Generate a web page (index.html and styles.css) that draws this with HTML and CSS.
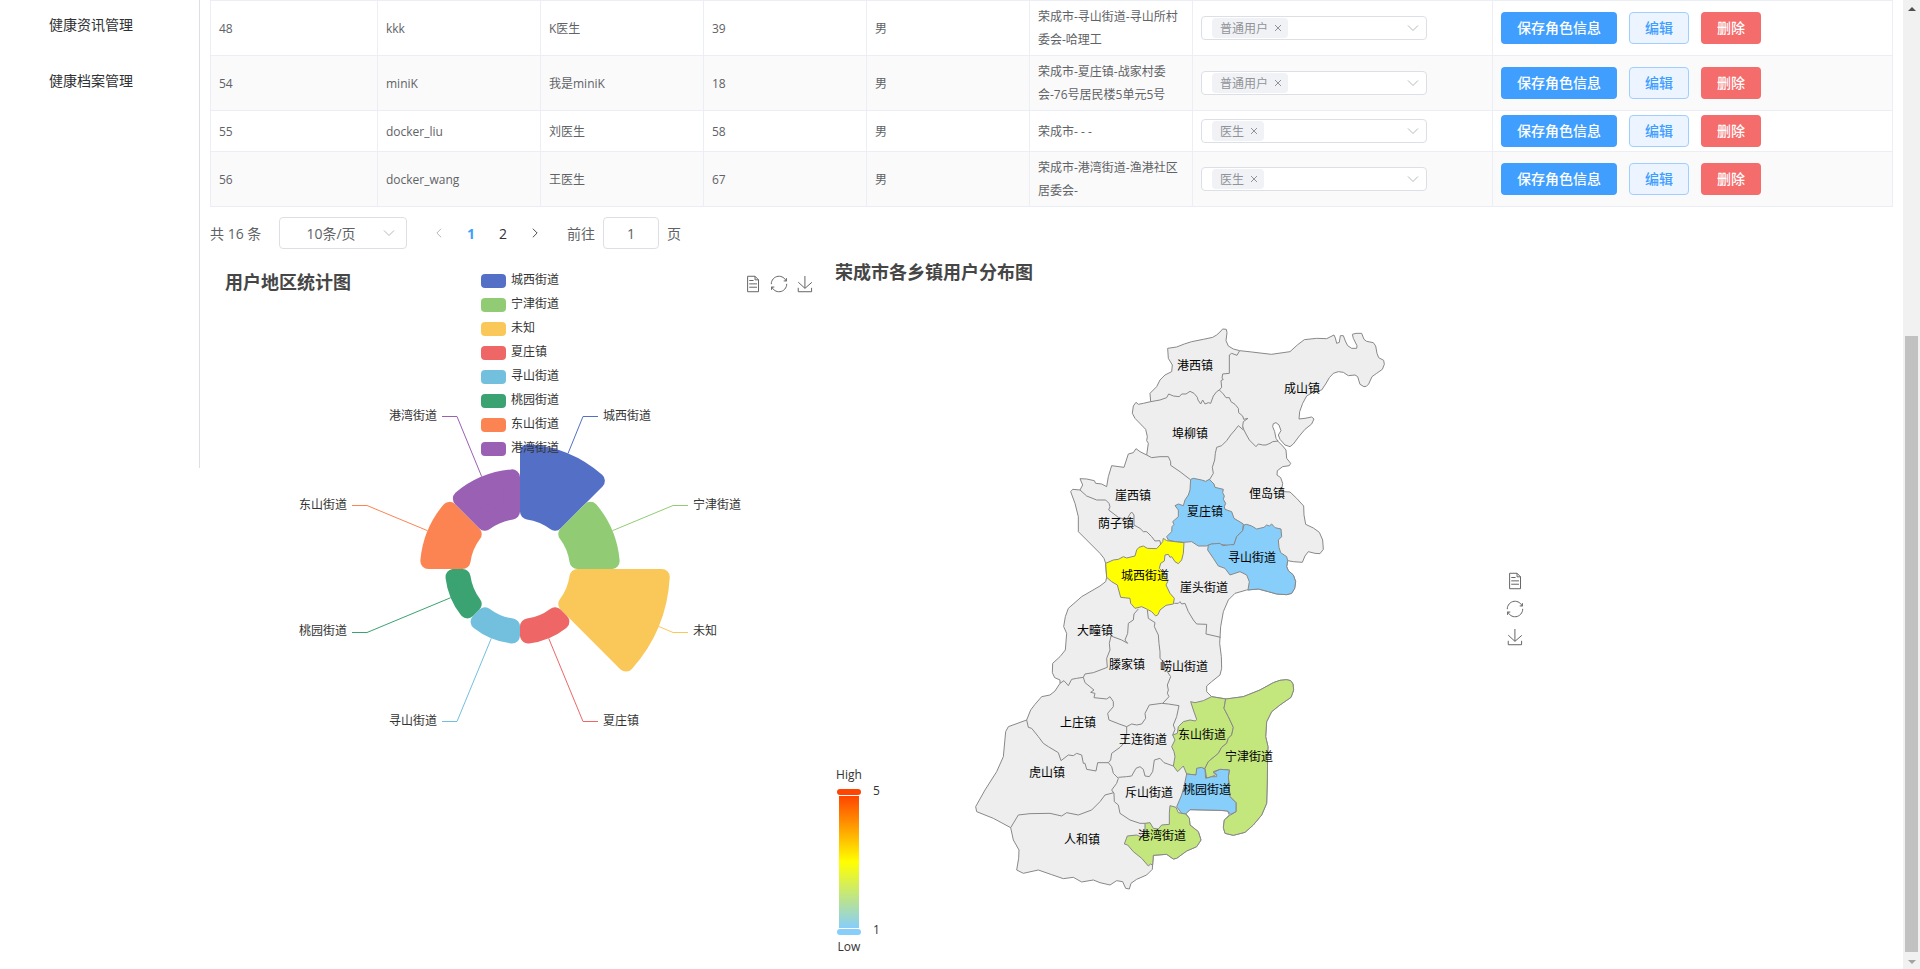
FILE: index.html
```html
<!DOCTYPE html>
<html lang="zh-CN">
<head>
<meta charset="utf-8">
<title>用户管理</title>
<link rel="stylesheet" href="styles.css">
</head>
<body>
<svg class="defs" aria-hidden="true">
  <symbol id="chevron" viewBox="0 0 14 14"><path d="M2 4.5l5 5 5-5"/></symbol>
  <symbol id="cross" viewBox="0 0 8 8"><path d="M1 1l6 6M7 1L1 7"/></symbol>
  <symbol id="doc" viewBox="2 1 58 58"><path d="M17.5,17.3H33M45.4,29.5h-28M11.5,2v56H51V14.8L38.4,2H11.5zM38.4,2.2v12.7H51M45.4,41.7h-28"/></symbol>
  <symbol id="restore" viewBox="1 1 58 58"><path d="M47,18.9h9.8V8.7M56.3,20.1C52.1,9,40.5,0.6,26.8,2.1C12.6,3.7,1.6,16.2,2.1,30.6M13,41.1H3.1v10.2M3.7,39.9c4.2,11.1,15.8,19.5,29.5,18c14.2-1.6,25.2-14.1,24.7-28.5"/></symbol>
  <symbol id="save" viewBox="0 0 59 59"><path d="M4.7,22.9L29.3,45.5L54.7,23.4M4.6,43.6L4.6,58L53.8,58L53.8,43.6M29.2,45.1L29.2,0"/></symbol>
</svg>
<div class="layout">
  <nav class="sidebar">
    <a class="menu-item" href="#">健康资讯管理</a>
    <a class="menu-item" href="#">健康档案管理</a>
  </nav>
  <main class="main">
    <table class="users">
      <colgroup><col class="c-id"><col class="c-md"><col class="c-md"><col class="c-md"><col class="c-md"><col class="c-md"><col class="c-role"><col></colgroup>
      <tbody>
        <tr><td>48</td><td>kkk</td><td>K医生</td><td>39</td><td>男</td><td>荣成市-寻山街道-寻山所村委会-哈理工</td>
          <td><div class="role"><select class="role-select" aria-label="角色"><option></option></select><span class="tag">普通用户<button class="tag-close" aria-label="移除"><svg><use href="#cross"/></svg></button></span><svg class="chev"><use href="#chevron"/></svg></div></td>
          <td><div class="ops"><button class="btn primary">保存角色信息</button><button class="btn plain">编辑</button><button class="btn danger">删除</button></div></td></tr>
        <tr><td>54</td><td>miniK</td><td>我是miniK</td><td>18</td><td>男</td><td>荣成市-夏庄镇-战家村委会-76号居民楼5单元5号</td>
          <td><div class="role"><select class="role-select" aria-label="角色"><option></option></select><span class="tag">普通用户<button class="tag-close" aria-label="移除"><svg><use href="#cross"/></svg></button></span><svg class="chev"><use href="#chevron"/></svg></div></td>
          <td><div class="ops"><button class="btn primary">保存角色信息</button><button class="btn plain">编辑</button><button class="btn danger">删除</button></div></td></tr>
        <tr><td>55</td><td>docker_liu</td><td>刘医生</td><td>58</td><td>男</td><td>荣成市- - -</td>
          <td><div class="role"><select class="role-select" aria-label="角色"><option></option></select><span class="tag">医生<button class="tag-close" aria-label="移除"><svg><use href="#cross"/></svg></button></span><svg class="chev"><use href="#chevron"/></svg></div></td>
          <td><div class="ops"><button class="btn primary">保存角色信息</button><button class="btn plain">编辑</button><button class="btn danger">删除</button></div></td></tr>
        <tr><td>56</td><td>docker_wang</td><td>王医生</td><td>67</td><td>男</td><td>荣成市-港湾街道-渔港社区居委会-</td>
          <td><div class="role"><select class="role-select" aria-label="角色"><option></option></select><span class="tag">医生<button class="tag-close" aria-label="移除"><svg><use href="#cross"/></svg></button></span><svg class="chev"><use href="#chevron"/></svg></div></td>
          <td><div class="ops"><button class="btn primary">保存角色信息</button><button class="btn plain">编辑</button><button class="btn danger">删除</button></div></td></tr>
      </tbody>
    </table>

    <div class="pager">
      <span class="total">共 16 条</span>
      <div class="size"><select class="size-select" aria-label="每页条数"><option>10条/页</option></select><svg class="chev"><use href="#chevron"/></svg></div>
      <div class="pages">
        <button class="page off" aria-label="上一页"><svg class="arrow prev"><use href="#chevron"/></svg></button>
        <button class="page current">1</button>
        <button class="page">2</button>
        <button class="page" aria-label="下一页"><svg class="arrow next"><use href="#chevron"/></svg></button>
      </div>
      <label class="jump">前往<input class="jump-input" type="text" value="1">页</label>
    </div>

    <div class="charts">
      <section class="chart pie">
        <svg class="plot" width="600" height="600" viewBox="220 269 600 600">
          <g transform="translate(520 569)" class="wedges">
            <path fill="#5470c6" stroke="#5470c6" d="M8-57.446V-116.726A117 117 0 0 1 76.881-88.195L34.963-46.277A58 58 0 0 0 8-57.446Z"/>
            <path fill="#91cc75" stroke="#91cc75" transform="rotate(45)" d="M8-57.446V-91.651A92 92 0 0 1 59.15-70.464L34.963-46.277A58 58 0 0 0 8-57.446Z"/>
            <path fill="#fac858" stroke="#fac858" transform="rotate(90)" d="M8-57.446V-141.774A142 142 0 0 1 94.592-105.906L34.963-46.277A58 58 0 0 0 8-57.446Z"/>
            <path fill="#ee6666" stroke="#ee6666" transform="rotate(135)" d="M8-57.446V-66.521A67 67 0 0 1 41.38-52.69L34.963-46.277A58 58 0 0 0 8-57.446Z"/>
            <path fill="#73c0de" stroke="#73c0de" transform="rotate(180)" d="M8-57.446V-66.521A67 67 0 0 1 41.38-52.69L34.963-46.277A58 58 0 0 0 8-57.446Z"/>
            <path fill="#3ba272" stroke="#3ba272" transform="rotate(225)" d="M8-57.446V-66.521A67 67 0 0 1 41.38-52.69L34.963-46.277A58 58 0 0 0 8-57.446Z"/>
            <path fill="#fc8452" stroke="#fc8452" transform="rotate(270)" d="M8-57.446V-91.651A92 92 0 0 1 59.15-70.464L34.963-46.277A58 58 0 0 0 8-57.446Z"/>
            <path fill="#9a60b4" stroke="#9a60b4" transform="rotate(315)" d="M8-57.446V-91.651A92 92 0 0 1 59.15-70.464L34.963-46.277A58 58 0 0 0 8-57.446Z"/>
          </g>
          <g class="leaders">
            <path stroke="#5470c6" d="M568 453.5L583 416.5H598"/>
            <path stroke="#91cc75" d="M612.4 530.7L673 505.5H688"/>
            <path stroke="#fac858" d="M658.6 626.4L673 632.5H688"/>
            <path stroke="#ee6666" d="M548.7 638.3L583 721.5H598"/>
            <path stroke="#73c0de" d="M491.3 638.3L457 721.5H442"/>
            <path stroke="#3ba272" d="M450.7 597.7L367 632.5H352"/>
            <path stroke="#fc8452" d="M427.6 530.7L367 505.5H352"/>
            <path stroke="#9a60b4" d="M481.7 476.6L457 416.5H442"/>
          </g>
          <g class="labels">
            <text x="603" y="420">城西街道</text><text x="693" y="509">宁津街道</text><text x="693" y="635">未知</text><text x="603" y="725">夏庄镇</text>
            <g class="end"><text x="437" y="725">寻山街道</text><text x="347" y="635">桃园街道</text><text x="347" y="509">东山街道</text><text x="437" y="420">港湾街道</text></g>
          </g>
        </svg>
        <h2 class="chart-title">用户地区统计图</h2>
        <ul class="legend">
          <li><i style="background:#5470c6"></i>城西街道</li>
          <li><i style="background:#91cc75"></i>宁津街道</li>
          <li><i style="background:#fac858"></i>未知</li>
          <li><i style="background:#ee6666"></i>夏庄镇</li>
          <li><i style="background:#73c0de"></i>寻山街道</li>
          <li><i style="background:#3ba272"></i>桃园街道</li>
          <li><i style="background:#fc8452"></i>东山街道</li>
          <li><i style="background:#9a60b4"></i>港湾街道</li>
        </ul>
        <div class="toolbox">
          <button class="tool" aria-label="数据视图"><svg><use href="#doc"/></svg></button>
          <button class="tool" aria-label="还原"><svg><use href="#restore"/></svg></button>
          <button class="tool" aria-label="保存为图片"><svg><use href="#save"/></svg></button>
        </div>
      </section>

      <section class="chart map">
        <svg class="plot" width="700" height="700" viewBox="830 259 700 700">
          <defs><linearGradient id="heat" x1="0" y1="1" x2="0" y2="0"><stop offset="0" stop-color="#87cefa"/><stop offset=".5" stop-color="#ffff00"/><stop offset="1" stop-color="#ff4500"/></linearGradient></defs>
          <g class="regions" transform="translate(960 310) scale(.33333)">
            <path fill="#eee" d="M623 115L650 111 673 102 695 95 730 88 758 82 770 75 780 66 788 57 799 58 801 68 798 92 805 108 820 117 839 122 875 126 934 133 990 125 1012 105 1033 89 1070 85 1100 86 1122 75 1126 84 1130 100 1138 97 1141 77 1150 77 1156 93 1163 107 1175 115 1190 115 1191 107 1180 85 1177 73 1188 70 1205 70 1212 88 1220 94 1240 98 1247 108 1251 130 1256 143 1271 151 1273 163 1267 178 1250 190 1236 200 1226 222 1219 229 1212 230 1200 223 1193 200 1185 195 1165 197 1150 187 1135 185 1120 190 1108 203 1097 222 1085 240 1060 246 1040 258 1028 280 1019 305 1017 327 1035 325 1055 321 1062 327 1055 342 1035 358 1018 378 1000 402 990 410 975 405 960 388 955 375 963 362 957 345 948 338 940 341 938 350 944 365 948 385 955 395 968 408 978 420 980 445 992 460 988 467 968 470 952 482 951 495 962 503 968 520 966 533 973 545 990 546 1010 565 1031 588 1032 615 1037 643 1060 654 1078 667 1088 690 1090 718 1080 731 1065 730 1045 725 1035 738 1027 757 1000 755 983 752 980 770 985 782 1000 795 1007 815 1004 835 995 850 980 854 950 852 925 845 895 837 860 840 825 850 805 870 790 905 782 950 779 1000 784 1040 785 1075 780 1095 755 1115 740 1128 740 1145 755 1160 800 1167 850 1160 900 1140 940 1118 960 1111 980 1109 992 1112 999 1122 1001 1140 993 1162 960 1185 935 1205 920 1235 917 1280 924 1310 923 1330 922 1410 920 1480 905 1515 880 1545 855 1567 820 1576 795 1570 790 1552 793 1530 808 1515 803 1503 780 1501 690 1499 677 1510 688 1525 690 1545 715 1565 723 1590 710 1610 680 1623 650 1645 640 1647 620 1633 580 1636 578 1660 577 1678 560 1695 530 1708 513 1720 508 1737 497 1735 488 1715 470 1712 450 1725 420 1718 400 1710 365 1716 340 1702 310 1706 275 1694 235 1680 190 1690 170 1680 176 1645 177 1620 160 1590 152 1553 100 1525 50 1505 47 1490 75 1440 110 1385 130 1340 137 1265 145 1250 200 1230 212 1200 225 1183 245 1160 270 1155 285 1143 300 1120 300 1110 284 1103 277 1088 278 1060 300 1040 316 1020 320 970 311 950 316 920 325 895 365 860 420 828 437 815 440 802 437 760 432 745 420 730 380 690 355 665 355 620 345 580 332 545 338 538 360 540 368 525 360 506 380 507 403 512 407 520 425 522 440 530 445 500 455 467 492 472 505 432 520 428 528 416 540 425 560 435 565 400 560 392 562 380 557 358 525 325 517 310 520 288 528 277 535 283 550 280 572 275 570 250 590 230 600 210 615 195 635 185 637 165 625 145Z"/>
            <path fill="#87cefa" d="M692 508L700 505 725 510 737 514 748 508 762 522 765 532 790 538 788 548 793 558 790 568 797 580 793 590 795 598 815 605 822 625 850 642 848 662 830 680 823 702 810 708 790 704 755 702 740 708 715 708 695 695 670 697 645 695 625 690 620 680 635 665 636 650 642 643 638 635 655 620 655 600 645 587 655 582 670 587 675 570 685 555 690 540Z"/>
            <path fill="#87cefa" d="M852 645L860 643 875 648 890 657 912 652 920 645 928 648 935 642 945 653 963 657 965 680 955 690 957 712 962 728 980 740 983 752 980 770 985 782 1000 795 1007 815 1004 835 995 850 980 854 950 852 925 845 895 837 864 840 868 815 860 795 840 785 825 790 810 795 795 775 775 768 760 745 743 720 745 705 755 702 780 700 787 707 812 704 822 704 830 680 848 662Z"/>
            <path fill="#ffff00" d="M437 760L460 750 475 748 490 740 500 744 525 738 530 720 537 712 550 708 562 715 590 716 600 705 608 695 610 685 620 692 645 695 672 698 670 730 665 750 655 761 645 755 635 740 630 742 625 733 615 735 613 753 602 760 598 775 608 785 610 795 623 815 618 825 630 850 643 865 640 882 618 886 600 900 594 914 587 918 575 905 562 898 545 890 525 895 512 880 510 865 482 862 472 825 455 815 440 802Z"/>
            <path fill="#c3e67d" d="M755 1160L730 1172 705 1178 692 1175 700 1200 710 1228 706 1233 690 1230 670 1235 655 1250 652 1270 638 1275 645 1290 635 1310 642 1325 645 1340 640 1368 653 1385 670 1368 680 1392 708 1395 712 1375 735 1375 745 1355 775 1330 785 1312 800 1300 805 1285 815 1275 820 1252 805 1220 792 1195 797 1167Z"/>
            <path fill="#c3e67d" d="M797 1167L850 1160 900 1140 940 1118 960 1111 980 1109 992 1112 999 1122 1001 1140 993 1162 960 1185 935 1205 920 1235 917 1280 924 1310 923 1330 922 1410 920 1480 905 1515 880 1545 855 1567 820 1576 795 1570 790 1552 793 1530 808 1517 828 1505 828 1478 810 1460 805 1400 808 1380 780 1378 760 1385 770 1393 755 1400 740 1405 735 1375 745 1355 775 1330 785 1312 800 1300 805 1285 815 1275 820 1252 805 1220 792 1195Z"/>
            <path fill="#87cefa" d="M680 1392L708 1395 710 1375 725 1372 735 1378 737 1405 755 1400 770 1400 770 1393 760 1388 780 1378 808 1380 805 1400 810 1460 828 1478 828 1505 812 1513 803 1503 780 1501 690 1499 677 1512 665 1510 650 1490 665 1455 672 1430Z"/>
            <path fill="#c3e67d" d="M630 1487L648 1492 655 1508 677 1512 688 1525 690 1545 715 1565 723 1590 710 1610 680 1623 650 1645 640 1647 620 1633 580 1636 578 1666 572 1662 565 1668 545 1645 520 1625 503 1605 493 1602 502 1578 530 1575 545 1582 555 1565 555 1540 570 1538 580 1555 595 1557 605 1545 628 1543 628 1510Z"/>
            <g fill="none">
              <path d="M839 122L831 136 815 130 808 135 808 190 788 192 786 205 790 208 783 212 785 232 778 240 790 252 798 263 808 263 813 275 825 283 835 295 836 308 848 318 851 328 864 325 850 335 848 348 850 355"/>
              <path d="M572 275L600 270 620 263 626 252 640 258 658 260 665 252 678 252 690 244 702 250 712 262 714 270 722 282 728 270 735 282 745 278 752 280 760 258 770 245 778 240"/>
              <path d="M850 360L835 347 825 360 812 375 800 392 785 407 770 412 766 430 764 450 757 472 760 490 748 510"/>
              <path d="M848 352L858 372 868 390 880 402 888 410 895 402 908 405 918 405 930 400 938 395 955 393"/>
              <path d="M560 435L575 443 600 440 625 440 632 455 632 466 660 485 690 508"/>
              <path d="M360 540L380 558 410 570 437 570 447 580 450 590 446 600 475 622 500 630 510 612 515 606 522 615 522 645 540 655 550 665 560 665 575 680 585 693 600 692 602 705"/>
              <path d="M643 880L655 880 660 875 665 882 675 880 685 905 700 930 710 942 740 943 738 972 782 982"/>
              <path d="M535 897L522 912 520 930 505 940 503 970 495 990 503 1000 485 990 453 978 448 1000 450 1020 440 1045 442 1072 400 1088 375 1092 370 1102 350 1105 335 1108 325 1127 312 1112 300 1120"/>
              <path d="M562 900L565 925 585 938 583 950 595 975 597 1000 600 1025 600 1045 610 1055 622 1085 632 1100 622 1125 625 1140 622 1150 627 1160 608 1180"/>
              <path d="M370 1102L375 1118 402 1140 392 1147 405 1150 402 1163 440 1167 450 1160 460 1175 460 1190 443 1210 447 1230 480 1243 500 1250 515 1242 530 1245 545 1242 557 1225 555 1210 568 1185 605 1180 625 1182 657 1187 650 1220 640 1245 645 1258 638 1275"/>
              <path d="M200 1230L205 1252 215 1255 235 1280 250 1300 265 1310 295 1328 303 1352 325 1335 340 1337 350 1330 365 1335 370 1360 375 1360 380 1378 408 1383 413 1358 445 1358 455 1370 460 1390 475 1405 470 1420 455 1440 462 1450 463 1475 475 1485 480 1510 510 1530 540 1540 555 1540"/>
              <path d="M500 1250L500 1270 496 1295 480 1312 455 1330 452 1350 445 1358"/>
              <path d="M475 1402L500 1400 515 1398 528 1375 540 1370 550 1378 555 1398 568 1400 578 1385 583 1350 600 1345 612 1358 640 1368"/>
              <path d="M152 1553L175 1515 210 1511 270 1510 305 1518 320 1508 355 1515 395 1500 420 1475 435 1455 462 1448"/>
            </g>
          </g>
          <g class="places">
            <text x="1195" y="370">港西镇</text><text x="1302" y="393">成山镇</text><text x="1190" y="438">埠柳镇</text><text x="1133" y="500">崖西镇</text><text x="1267" y="498">俚岛镇</text><text x="1205" y="516">夏庄镇</text><text x="1116" y="528">荫子镇</text><text x="1252" y="562">寻山街道</text><text x="1145" y="580">城西街道</text><text x="1204" y="592">崖头街道</text><text x="1095" y="635">大疃镇</text><text x="1127" y="669">滕家镇</text><text x="1184" y="671">崂山街道</text><text x="1078" y="727">上庄镇</text><text x="1143" y="744">王连街道</text><text x="1202" y="739">东山街道</text><text x="1249" y="761">宁津街道</text><text x="1047" y="777">虎山镇</text><text x="1149" y="797">斥山街道</text><text x="1207" y="794">桃园街道</text><text x="1162" y="840">港湾街道</text><text x="1082" y="844">人和镇</text>
          </g>
          <rect x="839" y="796" width="20" height="132" fill="url(#heat)"/>
          <rect x="837" y="789" width="24" height="6" rx="3" fill="#ff4500"/>
          <rect x="837" y="929" width="24" height="6" rx="3" fill="#87cefa"/>
          <g class="labels">
            <text x="873" y="795">5</text><text x="873" y="934">1</text>
            <g class="mid"><text x="849" y="779">High</text><text x="849" y="951">Low</text></g>
          </g>
        </svg>
        <h2 class="chart-title">荣成市各乡镇用户分布图</h2>
        <div class="toolbox vertical">
          <button class="tool" aria-label="数据视图"><svg><use href="#doc"/></svg></button>
          <button class="tool" aria-label="还原"><svg><use href="#restore"/></svg></button>
          <button class="tool" aria-label="保存为图片"><svg><use href="#save"/></svg></button>
        </div>
      </section>
    </div>
  </main>
  <div class="scrollbar" aria-hidden="true"><i class="up"></i><div class="thumb"></div><i class="down"></i></div>
</div>
</body>
</html>
```
FILE: styles.css
```css
* { box-sizing: border-box; }
body { margin: 0; overflow: hidden; background: #fff; color: #606266; font-family: "Open Sans", "Noto Sans CJK SC", sans-serif; font-size: 14px; }
button, input, select { font: inherit; color: inherit; margin: 0; padding: 0; border: 0; background: none; }
.defs { display: none; }

.layout { display: flex; height: 100vh; }
.sidebar { flex: none; width: 200px; height: 472px; border-right: 1px solid #dcdfe6; margin-top: -4px; }
.menu-item { display: flex; align-items: center; height: 56px; padding-left: 49px; color: #303133; text-decoration: none; }
.main { flex: 1; min-width: 0; padding: 0 10px; }

.users { width: 100%; table-layout: fixed; border-spacing: 0; border-top: 1px solid #ebeef5; border-left: 1px solid #ebeef5; font-size: 12px; line-height: 23px; }
.c-id { width: 167px; }
.c-md { width: 163px; }
.c-role { width: 300px; }
.users td { padding: 4px 8px; border-right: 1px solid #ebeef5; border-bottom: 1px solid #ebeef5; }
.users tr:nth-child(even) td { background: #fafafa; }

.role { position: relative; width: 226px; height: 24px; }
.role-select { display: block; appearance: none; width: 100%; height: 24px; border: 1px solid #dcdfe6; border-radius: 4px; background: #fff; }
.tag { position: absolute; left: 11px; top: 2px; display: flex; align-items: center; gap: 6px; height: 20px; padding: 0 6px 0 8px; border-radius: 4px; background: #f0f2f5; color: #909399; }
.tag-close { display: flex; width: 8px; height: 8px; }
.tag-close svg { width: 8px; height: 8px; fill: none; stroke: #909399; }
.chev { position: absolute; right: 7px; top: 50%; margin-top: -7px; width: 14px; height: 14px; fill: none; stroke: #b4b8c0; pointer-events: none; }

.ops { display: flex; gap: 12px; }
.btn { height: 32px; padding: 0 16px; border-radius: 4px; font-size: 14px; font-weight: 500; line-height: 20px; }
.primary { background: #409eff; color: #fff; }
.plain { padding: 0 15px; border: 1px solid #a0cfff; background: #ecf5ff; color: #409eff; }
.danger { background: #f56c6c; color: #fff; }

.pager { display: flex; align-items: center; gap: 16px; height: 32px; margin-top: 10px; }
.total { min-width: 53px; }
.size { position: relative; width: 128px; }
.size .chev { right: 11px; }
.size-select { display: block; appearance: none; width: 100%; height: 32px; padding-right: 24px; border: 1px solid #dcdfe6; border-radius: 4px; text-align: center; text-align-last: center; }
.pages { display: flex; }
.page { display: flex; align-items: center; justify-content: center; width: 32px; height: 32px; color: #303133; }
.current { color: #409eff; font-weight: 700; }
.off { color: #a8abb2; }
.arrow { width: 12px; height: 12px; fill: none; stroke: currentColor; }
.prev { transform: rotate(90deg); }
.next { transform: rotate(-90deg); }
.jump { display: flex; align-items: center; gap: 8px; }
.jump-input { width: 56px; height: 32px; border: 1px solid #dcdfe6; border-radius: 4px; text-align: center; }

.charts { display: flex; align-items: flex-start; gap: 10px; margin-top: 10px; padding-left: 10px; }
.chart { position: relative; flex: none; }
.pie { margin-top: 10px; }
.plot { display: block; }
.chart-title { position: absolute; left: 5px; top: 0; margin: 0; font-size: 18px; line-height: 26px; font-weight: 700; color: #464646; }
.legend { position: absolute; left: 261px; top: 0; margin: 0; padding: 0; list-style: none; font-size: 12px; line-height: 22px; color: #333; }
.legend li { display: flex; gap: 5px; height: 24px; }
.legend i { width: 25px; height: 14px; margin-top: 5px; border-radius: 4px; }
.toolbox { position: absolute; right: 7px; top: 7px; display: flex; gap: 10px; }
.toolbox.vertical { top: 314px; flex-direction: column; gap: 12px; }
.tool { display: flex; width: 16px; height: 16px; }
.tool svg { width: 16px; height: 16px; overflow: visible; fill: none; stroke: #666; }
symbol { overflow: visible; }
#doc path, #restore path, #save path { vector-effect: non-scaling-stroke; }
.wedges { stroke-width: 16; stroke-linejoin: round; }
.leaders { fill: none; }
.labels { fill: #333; font-size: 12px; }
.end { text-anchor: end; }
.mid { text-anchor: middle; }
.regions { stroke: #888; stroke-width: 3; stroke-linejoin: round; }
.places { fill: #000; font-size: 12px; text-anchor: middle; }

.scrollbar { flex: none; display: flex; flex-direction: column; align-items: center; width: 17px; background: #f1f1f1; }
.thumb { width: 13px; margin-top: 325px; flex: 1; background: #c1c1c1; }
.up, .down { flex: none; width: 0; height: 0; border: 4px solid transparent; }
.up { margin-top: 3px; border-bottom-color: #505050; }
.down { margin: 8px 0 1px; border-top-color: #a3a3a3; }
```
